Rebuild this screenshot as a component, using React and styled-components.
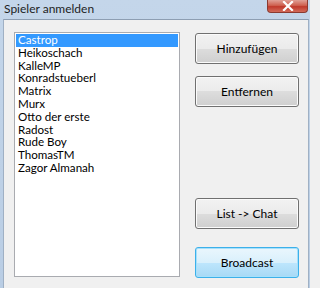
import React, { useState } from 'react';
import styled, { createGlobalStyle } from 'styled-components';

const players = [
  'Castrop',
  'Heikoschach',
  'KalleMP',
  'Konradstueberl',
  'Matrix',
  'Murx',
  'Otto der erste',
  'Radost',
  'Rude Boy',
  'ThomasTM',
  'Zagor Almanah',
];

const GlobalStyle = createGlobalStyle`
  html, body {
    margin: 0;
    padding: 0;
    background: #f0f0f0;
  }
  body {
    font-family: Lato, "Noto Sans", sans-serif;
    font-size: 12px;
  }
`;

const App = () => {
  const [selected, setSelected] = useState(0);

  return (
    <Window>
      <GlobalStyle />
      <TitleBar>
        <Title>Spieler anmelden</Title>
        <CloseButton>
          <svg width="12" height="10" viewBox="0 0 12 10">
            <path d="M2 1 L10 9 M10 1 L2 9" stroke="#fff" strokeWidth="2.2" strokeLinecap="square" />
          </svg>
        </CloseButton>
      </TitleBar>
      <Frame>
        <Body>
          <ListBox>
            {players.map((name, i) => (
              <ListItem key={name} $active={i === selected} onClick={() => setSelected(i)}>
                {name}
              </ListItem>
            ))}
          </ListBox>
          <ButtonColumn>
            <Button>Hinzufügen</Button>
            <Button>Entfernen</Button>
            <Spacer />
            <Button>List -&gt; Chat</Button>
            <Button $default $gap={18}>Broadcast</Button>
          </ButtonColumn>
        </Body>
      </Frame>
    </Window>
  );
};

export default App;

const Window = styled.div`
  width: 310px;
  height: 288px;
  display: flex;
  flex-direction: column;
  background: linear-gradient(180deg, #c4d6ea 0%, #b9cde4 100%);
  overflow: hidden;
`;

const TitleBar = styled.div`
  height: 19px;
  display: flex;
  align-items: flex-start;
  justify-content: space-between;
  padding-left: 4px;
  padding-right: 2px;
`;

const Title = styled.span`
  font-size: 12px;
  line-height: 17px;
  color: #1e1e1e;
`;

const CloseButton = styled.div`
  width: 39px;
  height: 12px;
  display: flex;
  align-items: center;
  justify-content: center;
  background: linear-gradient(180deg, #e0a096 0%, #cf6150 45%, #c0392b 55%, #d26b5a 100%);
  border: 1px solid #8b3a30;
  border-top: none;
  border-radius: 0 0 4px 4px;
`;

const Frame = styled.div`
  flex: 1;
  display: flex;
  padding: 0 2px 0 3px;
`;

const Body = styled.div`
  flex: 1;
  display: flex;
  gap: 15px;
  padding: 12px 9px 10px 10px;
  background: #f0f0f0;
  border-top: 1px solid #8d9eb2;
  border-left: 1px solid #9fb0c4;
  border-right: 1px solid #9fb0c4;
`;

const ListBox = styled.div`
  width: 166px;
  height: 245px;
  box-sizing: border-box;
  background: #fff;
  border: 1px solid #a9abb0;
  padding: 1px;
`;

const ListItem = styled.div`
  height: 12.8px;
  line-height: 12.8px;
  padding-left: 2px;
  font-size: 11.6px;
  color: ${p => (p.$active ? '#fff' : '#000')};
  background: ${p => (p.$active ? '#3399ff' : 'transparent')};
  cursor: default;
`;

const ButtonColumn = styled.div`
  display: flex;
  flex-direction: column;
  gap: 12px;
  padding-top: 1px;
`;

const Spacer = styled.div`
  flex: 1;
`;

const Button = styled.div`
  width: 104px;
  height: 31px;
  box-sizing: border-box;
  display: flex;
  align-items: center;
  justify-content: center;
  margin-top: ${p => (p.$gap ? `${p.$gap - 12}px` : '0')};
  font-size: 12px;
  color: #000;
  border-radius: 3px;
  border: 1px solid ${p => (p.$default ? '#3cb0ea' : '#707070')};
  box-shadow: inset 0 0 0 1px ${p => (p.$default ? '#a6e0fb' : '#fbfbfb')};
  background: ${p =>
    p.$default
      ? 'linear-gradient(180deg, #eaf6fd 0%, #d9f0fc 50%, #bee6fd 50%, #a7d9f5 100%)'
      : 'linear-gradient(180deg, #f2f2f2 0%, #ebebeb 50%, #dddddd 50%, #cfcfcf 100%)'};
`;
